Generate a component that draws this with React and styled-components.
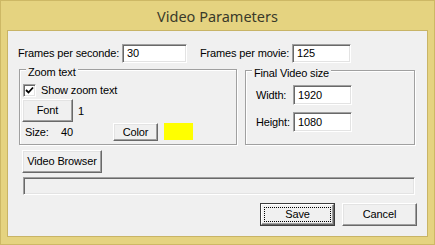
import React from "react";
import styled, { createGlobalStyle } from "styled-components";

const Global = createGlobalStyle`
  html, body { margin: 0; padding: 0; background: #e5d380; }
  * { box-sizing: border-box; }
  #root { width: 435px; height: 245px; }
`;

const Frame = styled.div`
  width: 435px;
  height: 245px;
  background: #e5d380;
  border: 1px solid #cdb865;
  display: flex;
  flex-direction: column;
  padding: 0 6px 7px 6px;
  font-family: "Liberation Sans", Arial, sans-serif;
  font-size: 11px;
  letter-spacing: -0.15px;
  color: #000;
`;

const TitleBar = styled.div`
  height: 29px;
  display: flex;
  align-items: center;
  justify-content: center;
  font-family: "Noto Sans", "Open Sans", sans-serif;
  font-size: 14.5px;
  letter-spacing: 0;
  color: #3a3a2a;
  padding-top: 1px;
`;

const Client = styled.div`
  flex: 1;
  background: #f0f0f0;
  border: 1px solid #c8b466;
  display: flex;
  flex-direction: column;
  padding-top: 13px;
`;

const TopRow = styled.div`
  display: grid;
  grid-template-columns: 104px 65px 13px 92px 59px;
  align-items: center;
  padding-left: 10px;
  height: 19px;
`;

const Label = styled.span`
  white-space: nowrap;
  line-height: 13px;
`;

const Input = styled.div`
  height: ${(p) => p.$h || 19}px;
  width: ${(p) => (p.$w ? p.$w + "px" : "auto")};
  background: ${(p) => (p.$disabled ? "#f0f0f0" : "#fff")};
  border-top: 1px solid #a0a0a0;
  border-left: 1px solid #a0a0a0;
  border-right: 1px solid #fff;
  border-bottom: 1px solid #fff;
  box-shadow: inset 1px 1px 0 #696969, inset -1px -1px 0 #e3e3e3;
  padding-left: 4px;
  display: flex;
  align-items: center;
  line-height: 13px;
`;

const GroupsRow = styled.div`
  display: flex;
  align-items: flex-start;
  margin-top: 6px;
  padding-left: 11px;
  gap: 8px;
`;

const Group = styled.div`
  width: ${(p) => p.$w}px;
  border: 1px solid #a0a0a0;
  box-shadow: inset 1px 1px 0 #fff, 1px 1px 0 #fff;
  margin-top: ${(p) => p.$mt || 0}px;
  height: ${(p) => p.$h}px;
  display: flex;
  flex-direction: column;
  padding-left: ${(p) => p.$pl || 0}px;
`;

const GroupTitle = styled.span`
  align-self: flex-start;
  margin: -4px 0 0 ${(p) => p.$ml || 6}px;
  padding: 0 2px;
  line-height: 13px;
  height: 13px;
  background: #f0f0f0;
  white-space: nowrap;
`;

const CheckRow = styled.div`
  display: flex;
  align-items: center;
  gap: 5px;
  margin: 5px 0 0 1px;
  height: 13px;
  line-height: 13px;
`;

const CheckBox = styled.span`
  width: 13px;
  height: 13px;
  background: #fff;
  border-top: 1px solid #a0a0a0;
  border-left: 1px solid #a0a0a0;
  border-right: 1px solid #fff;
  border-bottom: 1px solid #fff;
  box-shadow: inset 1px 1px 0 #696969, inset -1px -1px 0 #e3e3e3;
  display: flex;
  align-items: center;
  justify-content: center;
`;

const Button = styled.div`
  width: ${(p) => p.$w}px;
  height: ${(p) => p.$h || 23}px;
  background: #f0f0f0;
  border-top: 1px solid #fff;
  border-left: 1px solid #fff;
  border-right: 1px solid #696969;
  border-bottom: 1px solid #696969;
  box-shadow: inset -1px -1px 0 #a0a0a0, inset 1px 1px 0 #e3e3e3;
  display: flex;
  align-items: center;
  justify-content: center;
  line-height: 13px;
  white-space: nowrap;
  flex-shrink: 0;
`;

const DefaultButton = styled.div`
  width: ${(p) => p.$w}px;
  height: 23px;
  border: 1px solid #3c3c3c;
  display: flex;
  flex-shrink: 0;
`;

const DefaultFace = styled.div`
  flex: 1;
  background: #f0f0f0;
  border-top: 1px solid #fff;
  border-left: 1px solid #fff;
  border-right: 1px solid #696969;
  border-bottom: 1px solid #696969;
  box-shadow: inset -1px -1px 0 #a0a0a0;
  padding: 2px;
  display: flex;
`;

const FocusRect = styled.div`
  flex: 1;
  border: 1px dotted #000;
  display: flex;
  align-items: center;
  justify-content: center;
  line-height: 13px;
`;

const FontRow = styled.div`
  display: flex;
  align-items: center;
  gap: 5px;
  margin: 2px 0 0 0;
`;

const SizeRow = styled.div`
  display: grid;
  grid-template-columns: 36px 52px 45px 29px;
  column-gap: 0;
  align-items: center;
  margin: 1px 0 0 3px;
  line-height: 13px;
`;

const Swatch = styled.div`
  width: 29px;
  height: 17px;
  background: ${(p) => p.$color};
  margin-left: 6px;
  margin-top: -1px;
`;

const FieldRow = styled.div`
  display: grid;
  grid-template-columns: 37px 59px;
  align-items: center;
  margin-top: ${(p) => p.$mt}px;
`;

const BrowserRow = styled.div`
  display: flex;
  flex-direction: column;
  padding-left: 14px;
  margin-top: 5px;
`;

const PathRow = styled.div`
  padding-left: 15px;
  margin-top: 4px;
  width: 407px;
`;

const Footer = styled.div`
  display: flex;
  justify-content: flex-end;
  gap: 7px;
  padding-right: 10px;
  margin-top: 8px;
`;

export default function App() {
  return (
    <>
      <Global />
      <Frame>
        <TitleBar>Video Parameters</TitleBar>
        <Client>
          <TopRow>
            <Label>Frames per seconde:</Label>
            <Input>30</Input>
            <span />
            <Label>Frames per movie:</Label>
            <Input>125</Input>
          </TopRow>
          <GroupsRow>
            <Group $w={218} $h={76} $pl={2}>
              <GroupTitle $ml={4}>Zoom text</GroupTitle>
              <CheckRow>
                <CheckBox>
                  <svg width="9" height="9" viewBox="0 0 9 9">
                    <polyline
                      points="1,4 3.5,6.5 8,1.5"
                      fill="none"
                      stroke="#000"
                      strokeWidth="1.8"
                    />
                  </svg>
                </CheckBox>
                <span>Show zoom text</span>
              </CheckRow>
              <FontRow>
                <Button $w={51}>Font</Button>
                <span>1</span>
              </FontRow>
              <SizeRow>
                <span>Size:</span>
                <span>40</span>
                <Button $w={45} $h={18}>Color</Button>
                <Swatch $color="#ffff00" />
              </SizeRow>
            </Group>
            <Group $w={170} $h={75} $mt={1} $pl={10}>
              <GroupTitle $ml={-4}>Final Video size</GroupTitle>
              <FieldRow $mt={5}>
                <Label>Width:</Label>
                <Input $h={20}>1920</Input>
              </FieldRow>
              <FieldRow $mt={7}>
                <Label>Height:</Label>
                <Input $h={20}>1080</Input>
              </FieldRow>
            </Group>
          </GroupsRow>
          <BrowserRow>
            <Button $w={80}>Video Browser</Button>
          </BrowserRow>
          <PathRow>
            <Input $h={18} $disabled />
          </PathRow>
          <Footer>
            <DefaultButton $w={75}>
              <DefaultFace>
                <FocusRect>Save</FocusRect>
              </DefaultFace>
            </DefaultButton>
            <Button $w={75}>Cancel</Button>
          </Footer>
        </Client>
      </Frame>
    </>
  );
}
